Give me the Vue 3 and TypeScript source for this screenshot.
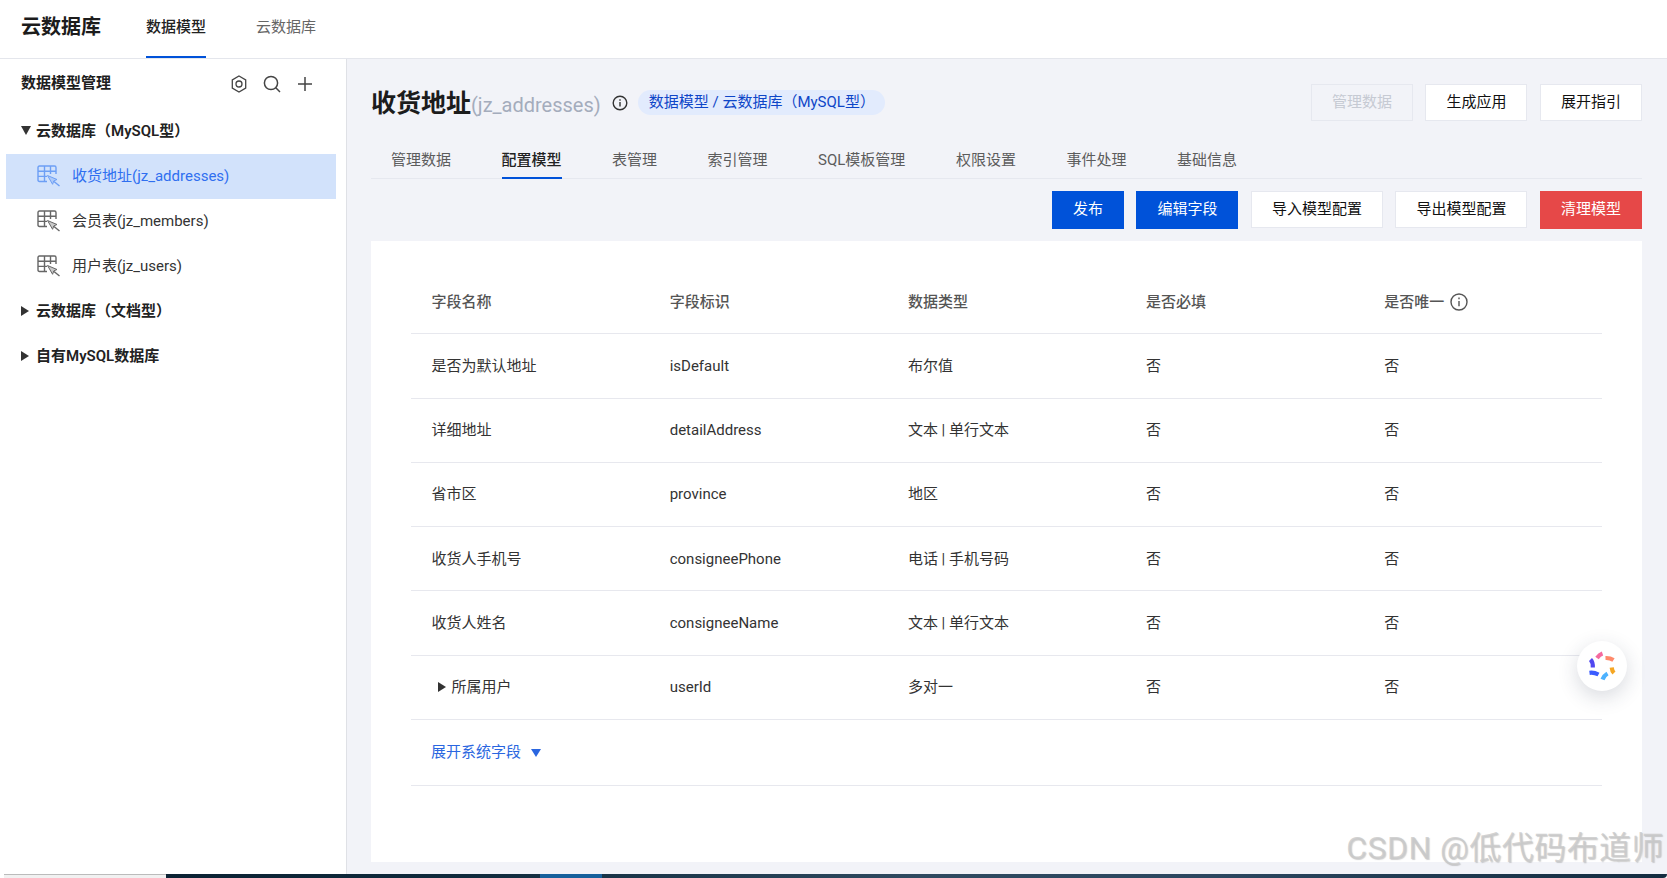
<script setup lang="ts">
const navTabs: string[] = ['管理数据', '配置模型', '表管理', '索引管理', 'SQL模板管理', '权限设置', '事件处理', '基础信息']
const models: string[] = ['收货地址(jz_addresses)', '会员表(jz_members)', '用户表(jz_users)']
const columns: string[] = ['字段名称', '字段标识', '数据类型', '是否必填']
interface Row { name: string; id: string; type: string; expand?: boolean }
const rows: Row[] = [
  { name: '是否为默认地址', id: 'isDefault', type: '布尔值' },
  { name: '详细地址', id: 'detailAddress', type: '文本 | 单行文本' },
  { name: '省市区', id: 'province', type: '地区' },
  { name: '收货人手机号', id: 'consigneePhone', type: '电话 | 手机号码' },
  { name: '收货人姓名', id: 'consigneeName', type: '文本 | 单行文本' },
  { name: '所属用户', id: 'userId', type: '多对一', expand: true },
]
</script>

<template>
  <div class="page">
    <header class="topbar">
      <div class="logo">云数据库</div>
      <nav class="topnav">
        <a class="topnav-item active">数据模型</a>
        <a class="topnav-item">云数据库</a>
      </nav>
    </header>

    <div class="body">
      <aside class="sidebar">
        <div class="side-head">
          <span class="side-title">数据模型管理</span>
          <div class="side-tools">
            <svg width="18" height="18" viewBox="0 0 18 18" fill="none" stroke="#444" stroke-width="1.3"><path d="M9 1 15.7 4.9v8.2L9 17 2.3 13.1V4.9z" /><circle cx="9" cy="9" r="3" /></svg>
            <svg width="18" height="18" viewBox="0 0 18 18" fill="none" stroke="#444" stroke-width="1.5"><circle cx="8" cy="8" r="6.6" /><path d="M12.8 12.8 17 17" /></svg>
            <svg width="16" height="16" viewBox="0 0 16 16" fill="none" stroke="#444" stroke-width="1.5"><path d="M8 1v14M1 8h14" /></svg>
          </div>
        </div>

        <div class="group"><span class="tri down"></span>云数据库（MySQL型）</div>
        <div v-for="(m, i) in models" :key="m" class="model" :class="{ selected: i === 0 }">
          <svg class="model-icon" width="24" height="22" viewBox="0 0 24 22" fill="none" stroke="currentColor" stroke-width="1.4">
            <path d="M10 16.5H2.5Q1 16.5 1 15V2.5Q1 1 2.5 1h15Q19 1 19 2.5V9M1 6.2h18M1 11.4h9M7.5 1v15.5M13.5 1v8" />
            <path d="M10.5 10.5 20 14.5l-3.2 1.4-1.2 3.4z" fill="currentColor" fill-opacity="0.35" stroke-width="1" />
            <path d="M17 16.5 22.5 21" />
          </svg>
          <span>{{ m }}</span>
        </div>
        <div class="group"><span class="tri right"></span>云数据库（文档型）</div>
        <div class="group"><span class="tri right"></span>自有MySQL数据库</div>
      </aside>

      <main class="main">
        <div class="head">
          <h1 class="title">收货地址<span class="sub">(jz_addresses)</span></h1>
          <svg class="head-info" width="16" height="16" viewBox="0 0 16 16" fill="none" stroke="#333" stroke-width="1.4"><circle cx="8" cy="8" r="6.8" /><path d="M8 7v4.6M8 4.2v1.5" /></svg>
          <span class="pill">数据模型 / 云数据库（MySQL型）</span>
          <div class="actions">
            <button class="btn disabled">管理数据</button>
            <button class="btn">生成应用</button>
            <button class="btn">展开指引</button>
          </div>
        </div>

        <nav class="tabs">
          <a v-for="t in navTabs" :key="t" class="tab" :class="{ active: t === '配置模型' }">{{ t }}</a>
        </nav>

        <div class="toolbar">
          <button class="btn primary">发布</button>
          <button class="btn primary">编辑字段</button>
          <button class="btn">导入模型配置</button>
          <button class="btn">导出模型配置</button>
          <button class="btn danger">清理模型</button>
        </div>

        <section class="card">
          <div class="row header">
            <div v-for="c in columns" :key="c" class="cell">{{ c }}</div>
            <div class="cell">
              是否唯一
              <svg class="th-info" width="18" height="18" viewBox="0 0 18 18" fill="none" stroke="#555" stroke-width="1.4"><circle cx="9" cy="9" r="8" /><path d="M9 8v5.2M9 4.6v1.6" /></svg>
            </div>
          </div>
          <div v-for="r in rows" :key="r.id" class="row">
            <div class="cell">
              <span v-if="r.expand" class="tri right small"></span>{{ r.name }}
            </div>
            <div class="cell">{{ r.id }}</div>
            <div class="cell">{{ r.type }}</div>
            <div class="cell">否</div>
            <div class="cell">否</div>
          </div>
          <div class="row more">
            <a class="more-link">展开系统字段<span class="tri blue"></span></a>
          </div>
        </section>
      </main>
    </div>

    <footer class="strip">
      <div class="strip-light"></div>
      <div class="strip-dark"><span class="strip-blue"></span></div>
    </footer>

    <div class="fab">
      <svg width="32" height="32" viewBox="0 0 32 32" fill="none" stroke-width="4.2">
        <path d="M11 8Q13.5 4.5 16.5 3.5" stroke="#f56a9f" />
        <path d="M19.5 8Q24 7.8 27.5 10" stroke="#ff8a6b" />
        <path d="M25.7 17.5Q26 21 28 23" stroke="#f5a623" />
        <path d="M21.5 23.5Q18 25.5 16.5 29.5" stroke="#4db2ff" />
        <path d="M3.5 22.8Q8 22.2 12.5 24.5" stroke="#3b5cff" />
        <path d="M4.5 9.5Q7 12 6.8 17.5" stroke="#5148f0" />
      </svg>
    </div>

    <div class="watermark">CSDN @低代码布道师</div>
  </div>
</template>

<style scoped>
.page {
  position: relative;
  display: flex;
  flex-direction: column;
  height: 878px;
  overflow: hidden;
  background: #f2f3f8;
  color: #222;
  font-family: Roboto, "Noto Sans CJK SC", sans-serif;
  font-size: 15px;
  line-height: 22px;
}

.topbar {
  display: flex;
  align-items: stretch;
  flex: none;
  height: 59px;
  box-sizing: border-box;
  padding-left: 21px;
  background: #fff;
  border-bottom: 1px solid #e4e6ec;
}
.logo {
  width: 125px;
  font-size: 20px;
  font-weight: 700;
  line-height: 55px;
  color: #1c1c1c;
}
.topnav {
  display: flex;
  gap: 50px;
}
.topnav-item {
  height: 58px;
  box-sizing: border-box;
  line-height: 55px;
  color: #666;
}
.topnav-item.active {
  color: #222;
  font-weight: 500;
  border-bottom: 2px solid #0052d9;
}

.body {
  flex: 1;
  display: flex;
  min-height: 0;
}

.sidebar {
  flex: none;
  width: 347px;
  box-sizing: border-box;
  background: #fff;
  border-right: 1px solid #dfe1e6;
}
.side-head {
  display: flex;
  align-items: center;
  justify-content: space-between;
  height: 50px;
  padding: 0 32px 0 21px;
}
.side-title {
  margin-bottom: 2px;
  font-weight: 700;
  color: #1e1e1e;
}
.side-tools {
  display: flex;
  align-items: center;
  gap: 15px;
  margin-right: 1px;
}
.side-tools svg:last-child {
  margin-left: 1px;
}
.group {
  display: flex;
  align-items: center;
  height: 45px;
  box-sizing: border-box;
  padding-left: 21px;
  padding-bottom: 2px;
  font-weight: 600;
  color: #222;
}
.model {
  display: flex;
  align-items: center;
  height: 45px;
  box-sizing: border-box;
  margin: 0 10px 0 6px;
  padding-left: 31px;
  padding-bottom: 2px;
  color: #333;
}
.model-icon {
  margin-right: 11px;
  margin-top: 1px;
  color: #666;
}
.model.selected {
  background: #d2e2fb;
  color: #2f6ff0;
}
.model.selected .model-icon {
  color: #6d9ff5;
}

.tri {
  display: inline-block;
  width: 0;
  height: 0;
  flex: none;
}
.tri.down {
  margin-right: 5px;
  border-left: 5.5px solid transparent;
  border-right: 5.5px solid transparent;
  border-top: 9px solid #333;
}
.tri.right {
  margin-right: 7px;
  border-top: 5px solid transparent;
  border-bottom: 5px solid transparent;
  border-left: 8px solid #333;
}
.tri.small {
  margin-left: 6px;
  margin-right: 6px;
}
.tri.blue {
  margin-left: 10px;
  margin-top: 2px;
  border-left: 5px solid transparent;
  border-right: 5px solid transparent;
  border-top: 8px solid #2a66e0;
}

.main {
  flex: 1;
  min-width: 0;
  padding: 25px 25px 0 24px;
}
.head {
  display: flex;
  align-items: center;
  height: 37px;
}
.title {
  margin: 3px 0 0;
  font-size: 25px;
  font-weight: 700;
  color: #1c1c1c;
  line-height: 37px;
}
.sub {
  font-size: 20px;
  font-weight: 400;
  color: #a4acbc;
}
.head-info {
  margin-left: 11px;
}
.pill {
  margin-left: 10px;
  height: 25px;
  padding: 0 10px 0 11px;
  border-radius: 13px;
  background: #e2ebfd;
  color: #0e46c8;
  font-size: 15px;
  line-height: 25px;
}
.actions {
  margin-left: auto;
  display: flex;
  gap: 12.5px;
}

.btn {
  height: 37px;
  padding: 0 20px 2px;
  box-sizing: border-box;
  border: 1px solid #e6e8ef;
  background: #fff;
  color: #111;
  font: inherit;
}
.btn.disabled {
  background: #f2f3f8;
  color: #c6cad3;
}
.btn.primary {
  height: 38px;
  background: #0052d9;
  border-color: #0052d9;
  color: #fff;
}
.btn.danger {
  height: 38px;
  background: #e64848;
  border-color: #e64848;
  color: #fff;
}

.tabs {
  display: flex;
  gap: 50.5px;
  height: 40px;
  margin-top: 17px;
  padding-left: 20px;
  border-bottom: 1px solid #e6e8ef;
}
.tab {
  height: 41px;
  box-sizing: border-box;
  line-height: 44px;
  color: #5c5c5c;
  white-space: nowrap;
}
.tab.active {
  color: #222;
  font-weight: 500;
  border-bottom: 2px solid #0052d9;
}

.toolbar {
  display: flex;
  justify-content: flex-end;
  gap: 12.5px;
  margin-top: 12px;
}

.card {
  height: 621px;
  box-sizing: border-box;
  margin-top: 12px;
  padding: 29px 40px 0;
  background: #fff;
}
.row {
  display: grid;
  grid-template-columns: repeat(5, 1fr);
  align-items: center;
  height: 64.25px;
  box-sizing: border-box;
  border-bottom: 1px solid #e7e8ee;
  color: #333;
}
.row.header {
  color: #555;
  font-weight: 500;
}
.cell {
  display: flex;
  align-items: center;
  padding-left: 20.5px;
}
.th-info {
  margin-left: 6px;
}
.row.more {
  display: flex;
  height: 66px;
  padding-left: 20px;
}
.more-link {
  display: flex;
  align-items: center;
  color: #2a66e0;
}

.strip {
  display: flex;
  flex: none;
  height: 4px;
  background: #fff;
}
.strip-light {
  width: 162px;
  margin-left: 4px;
  box-sizing: border-box;
  background: #f1f1f1;
  border-top: 1px solid #bbb;
}
.strip-dark {
  flex: 1;
  position: relative;
  border-bottom-right-radius: 8px;
  background: linear-gradient(90deg, #0b2233 0%, #0f2a3c 20%, #2f4a60 50%, #2c4760 70%, #132c40 100%);
}
.strip-blue {
  position: absolute;
  left: 374px;
  top: 0;
  width: 62px;
  height: 4px;
  background: #16609c;
}

.fab {
  position: absolute;
  left: 1577px;
  top: 641px;
  display: flex;
  align-items: center;
  justify-content: center;
  width: 50px;
  height: 50px;
  border-radius: 50%;
  background: #fff;
  box-shadow: 0 6px 20px rgba(40, 50, 80, 0.18);
}

.watermark {
  position: absolute;
  right: 3px;
  top: 826px;
  font-family: Roboto, "Noto Sans CJK SC", sans-serif;
  font-size: 32px;
  line-height: 44px;
  letter-spacing: 0.45px;
  color: rgba(200, 200, 200, 0.8);
  text-shadow: 1px 1px 1px rgba(120, 120, 120, 0.35);
  white-space: nowrap;
}
</style>
